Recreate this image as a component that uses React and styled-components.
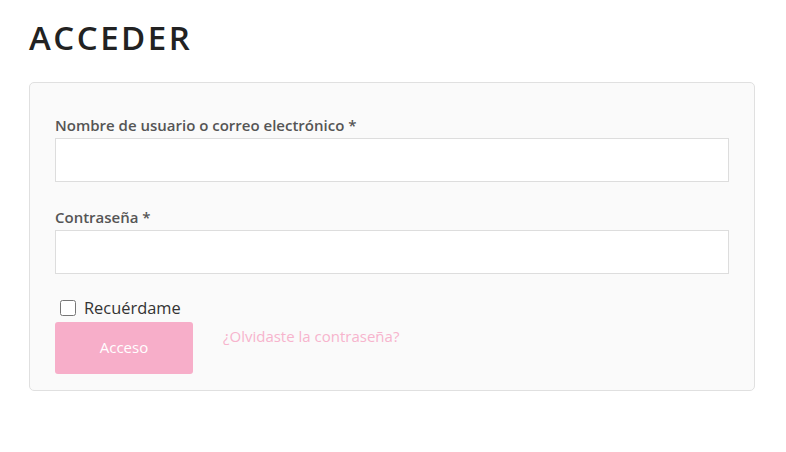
import React from 'react'
import styled, { createGlobalStyle } from 'styled-components'

const GlobalStyle = createGlobalStyle`
  body {
    margin: 0;
    background: #fff;
    font-family: "Open Sans", "Noto Sans", sans-serif;
  }
`

const Page = styled.div`
  padding: 14px 32px 0 29px;
`

const Title = styled.h1`
  margin: 0 0 20px;
  font-size: 33px;
  line-height: 48px;
  font-weight: 600;
  letter-spacing: 2.5px;
  color: #222;
`

const Card = styled.form`
  width: 726px;
  box-sizing: border-box;
  padding: 30px 25px 16px;
  background: #fafafa;
  border: 1px solid #e0e0e0;
  border-radius: 5px;
`

const Field = styled.div`
  display: flex;
  flex-direction: column;
  margin-bottom: ${(p) => p.$gap || 22}px;
`

const Label = styled.label`
  font-size: 15px;
  line-height: 24px;
  font-weight: 600;
  color: #555;
  margin-bottom: 1px;
`

const Input = styled.input`
  height: 44px;
  box-sizing: border-box;
  border: 1px solid #dddddd;
  background: #fff;
  outline: none;
  font: inherit;
`

const Remember = styled.label`
  display: flex;
  align-items: center;
  gap: 8px;
  margin-left: 5px;
  font-size: 16.4px;
  line-height: 24px;
  color: #333;

  input {
    margin: 0;
    width: 16px;
    height: 16px;
  }
`

const Actions = styled.div`
  display: flex;
  align-items: flex-start;
  gap: 30px;
  margin-top: 2px;
`

const Button = styled.button`
  width: 138px;
  height: 52px;
  border: none;
  border-radius: 3px;
  background: #f7aec9;
  color: #fff;
  font-family: inherit;
  font-size: 15px;
  padding: 0 0 3px;
`

const Link = styled.a`
  margin-top: 2px;
  font-size: 15px;
  line-height: 24px;
  color: #f7b4cd;
  text-decoration: none;
`

export default function App() {
  return (
    <>
      <GlobalStyle />
      <Page>
        <Title>ACCEDER</Title>
        <Card>
          <Field $gap={23}>
            <Label>Nombre de usuario o correo electrónico *</Label>
            <Input type="text" />
          </Field>
          <Field>
            <Label>Contraseña *</Label>
            <Input type="password" />
          </Field>
          <Remember>
            <input type="checkbox" />
            <span>Recuérdame</span>
          </Remember>
          <Actions>
            <Button type="button">Acceso</Button>
            <Link href="#">¿Olvidaste la contraseña?</Link>
          </Actions>
        </Card>
      </Page>
    </>
  )
}
